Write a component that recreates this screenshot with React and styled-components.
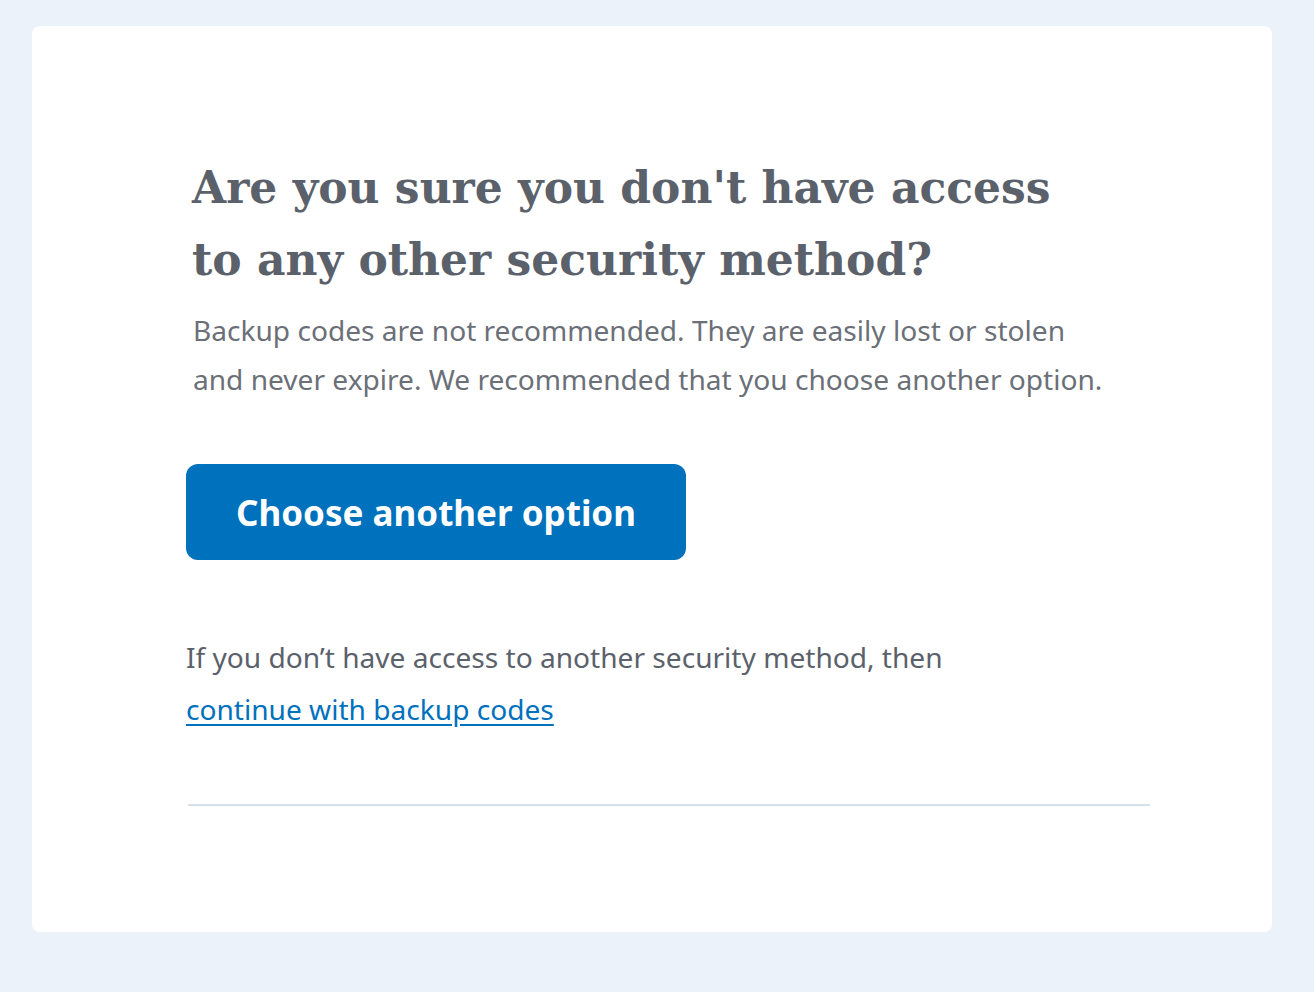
import styled, { createGlobalStyle } from 'styled-components'

const GlobalStyle = createGlobalStyle`
    body {
        margin: 0;
        background-color: #ecf2fa;
        font-family: "Noto Sans", "Open Sans", sans-serif;
    }
`

const StyledPage = styled.div`
    padding: 26px 42px 60px 32px;
`

const StyledCard = styled.main`
    background-color: #ffffff;
    border-radius: 8px;
    width: 1240px;
    height: 906px;
    box-sizing: border-box;
    padding: 126px 122px 0 154px;
`

const StyledTitle = styled.h1`
    margin: 0 0 10px 0;
    padding-left: 6px;
    font-family: "DejaVu Serif", "Liberation Serif", serif;
    font-weight: 700;
    font-size: 44px;
    line-height: 72px;
    color: #5b616b;
    max-width: 880px;
`

const StyledLead = styled.p`
    margin: 0;
    padding-left: 7px;
    font-size: 28.1px;
    line-height: 49px;
    color: #6b7078;
    white-space: nowrap;
`

const StyledButton = styled.button`
    margin-top: 60px;
    width: 500px;
    height: 96px;
    border: none;
    border-radius: 12px;
    background-color: #0071bc;
    color: #ffffff;
    font-family: "Noto Sans", "Open Sans", sans-serif;
    font-weight: 700;
    font-size: 35px;
    cursor: pointer;
`

const StyledNote = styled.p`
    margin: 71px 0 0 0;
    font-size: 28.1px;
    line-height: 52px;
    color: #5b616b;
`

const StyledLink = styled.a`
    color: #0071bc;
    text-decoration: underline;
    text-underline-offset: 4px;
`

const StyledDivider = styled.hr`
    margin: 69px 0 0 2px;
    border: none;
    height: 2px;
    background-color: #d6dfec;
`

const App = () => {
    return (
        <StyledPage>
            <GlobalStyle />
            <StyledCard>
                <StyledTitle>Are you sure you don't have access to any other security method?</StyledTitle>
                <StyledLead>
                    Backup codes are not recommended. They are easily lost or stolen
                    <br />
                    and never expire. We recommended that you choose another option.
                </StyledLead>
                <StyledButton>Choose another option</StyledButton>
                <StyledNote>
                    If you don’t have access to another security method, then
                    <br />
                    <StyledLink href="#">continue with backup codes</StyledLink>
                </StyledNote>
                <StyledDivider />
            </StyledCard>
        </StyledPage>
    )
}

export default App
